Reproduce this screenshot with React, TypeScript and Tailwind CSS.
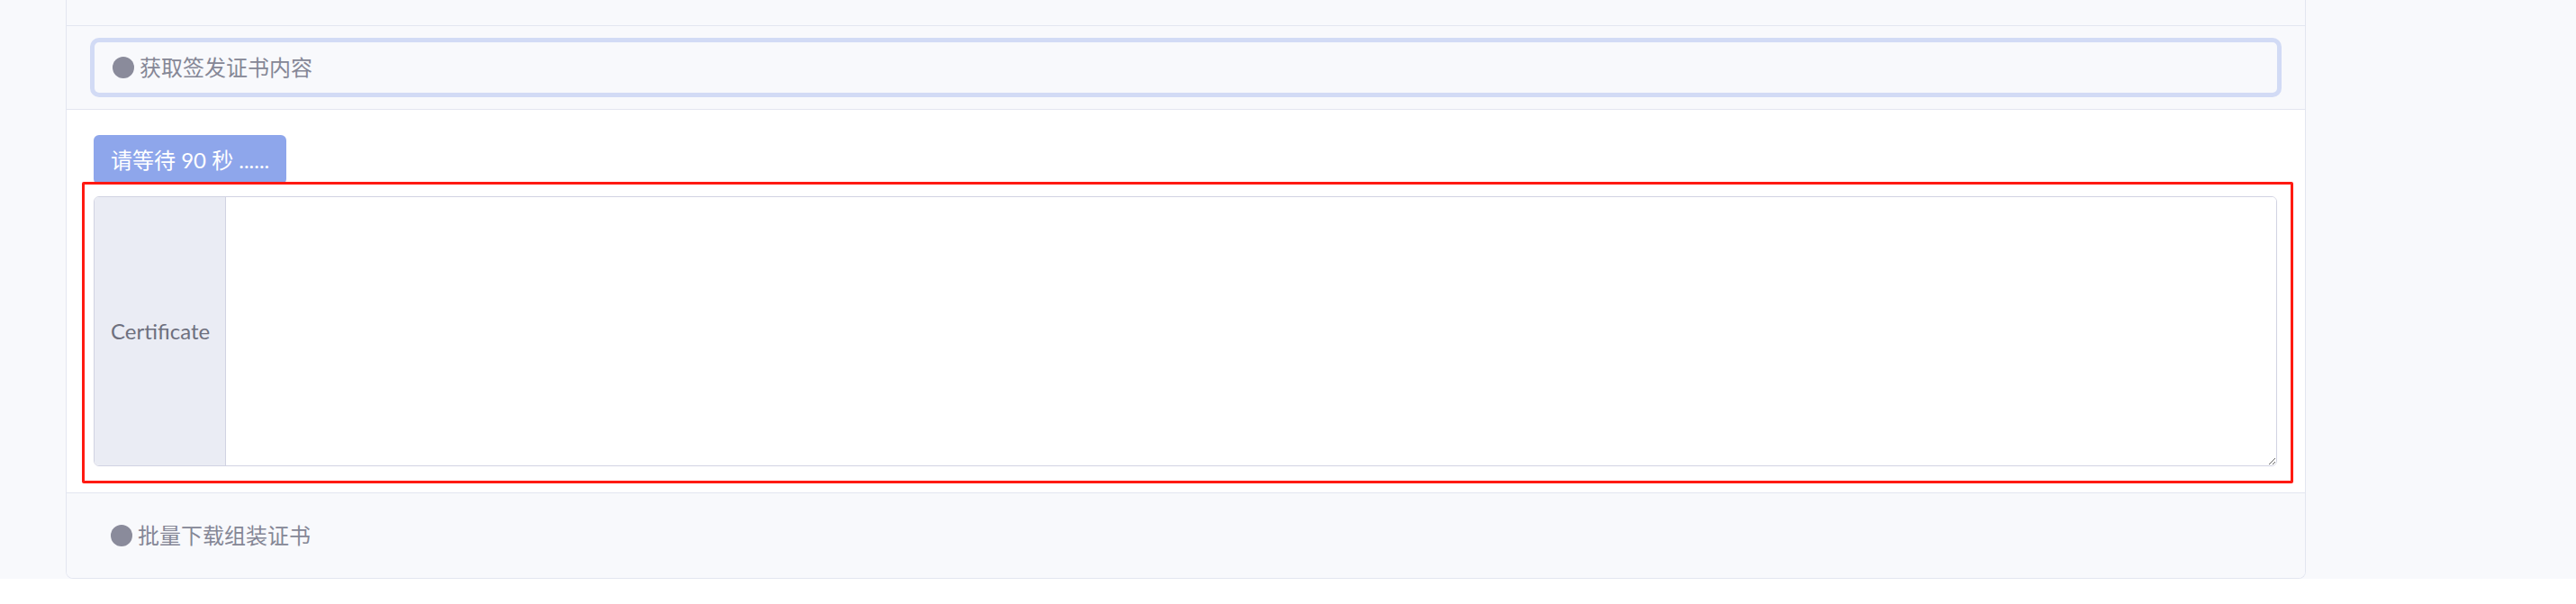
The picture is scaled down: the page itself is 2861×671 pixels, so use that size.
const font = "font-['Lato','Noto_Sans_CJK_SC',sans-serif]";

function Dot() {
  return <span className="inline-block w-[24px] h-[24px] rounded-full bg-[#8a8b9b] shrink-0" />;
}

export default function App() {
  return (
    <div className={`w-full min-h-[671px] bg-white ${font}`}>
      <div className="h-[643px] bg-[#f8f9fc] pl-[73px] pr-[300px]">
        {/* card */}
        <div className="h-full flex flex-col border-x border-b border-[#e3e6f0] rounded-b-[8px] overflow-hidden">
          {/* previous section tail */}
          <div className="h-[29px] shrink-0 border-b border-[#e3e6f0] bg-[#f8f9fc]" />

          {/* header */}
          <div className="shrink-0 px-[26px] py-[13px] border-b border-[#e3e6f0] bg-[#f8f9fc]">
            <div className="h-[66px] flex items-center gap-[6px] pl-[20px] border-[5px] border-[#d2dbf5] rounded-[10px] bg-[#f8f9fc] text-[24px] text-[#858796]">
              <Dot />
              <span>获取签发证书内容</span>
            </div>
          </div>

          {/* body */}
          <div className="shrink-0 bg-white pt-[28px] pb-[29px] pl-[30px] pr-[31px] border-b border-[#e3e6f0]">
            <button
              disabled
              className="h-[55px] px-[19px] rounded-[6px] bg-[#8ea6eb] text-white text-[24px] leading-none"
            >
              请等待 90 秒 ......
            </button>

            <div className="relative mt-[13px]">
              {/* highlight frame */}
              <div className="absolute -left-[13px] -top-[16px] -right-[18px] -bottom-[19px] border-[3px] border-[#ff1a12] rounded-[2px] pointer-events-none" />
              <div className="flex h-[300px] border border-[#d1d3e2] rounded-[6px] overflow-hidden">
                <div className="w-[146px] shrink-0 flex items-center pl-[18px] bg-[#eaecf4] border-r border-[#d1d3e2] text-[24px] text-[#6e707e]">
                  Certificate
                </div>
                <textarea className="flex-1 h-full bg-white outline-none resize-y p-3" />
              </div>
            </div>
          </div>

          {/* footer */}
          <div className="flex-1 flex items-center gap-[6px] pl-[49px] bg-[#f8f9fc] text-[24px] text-[#858796]">
            <Dot />
            <span>批量下载组装证书</span>
          </div>
        </div>
      </div>
    </div>
  );
}
